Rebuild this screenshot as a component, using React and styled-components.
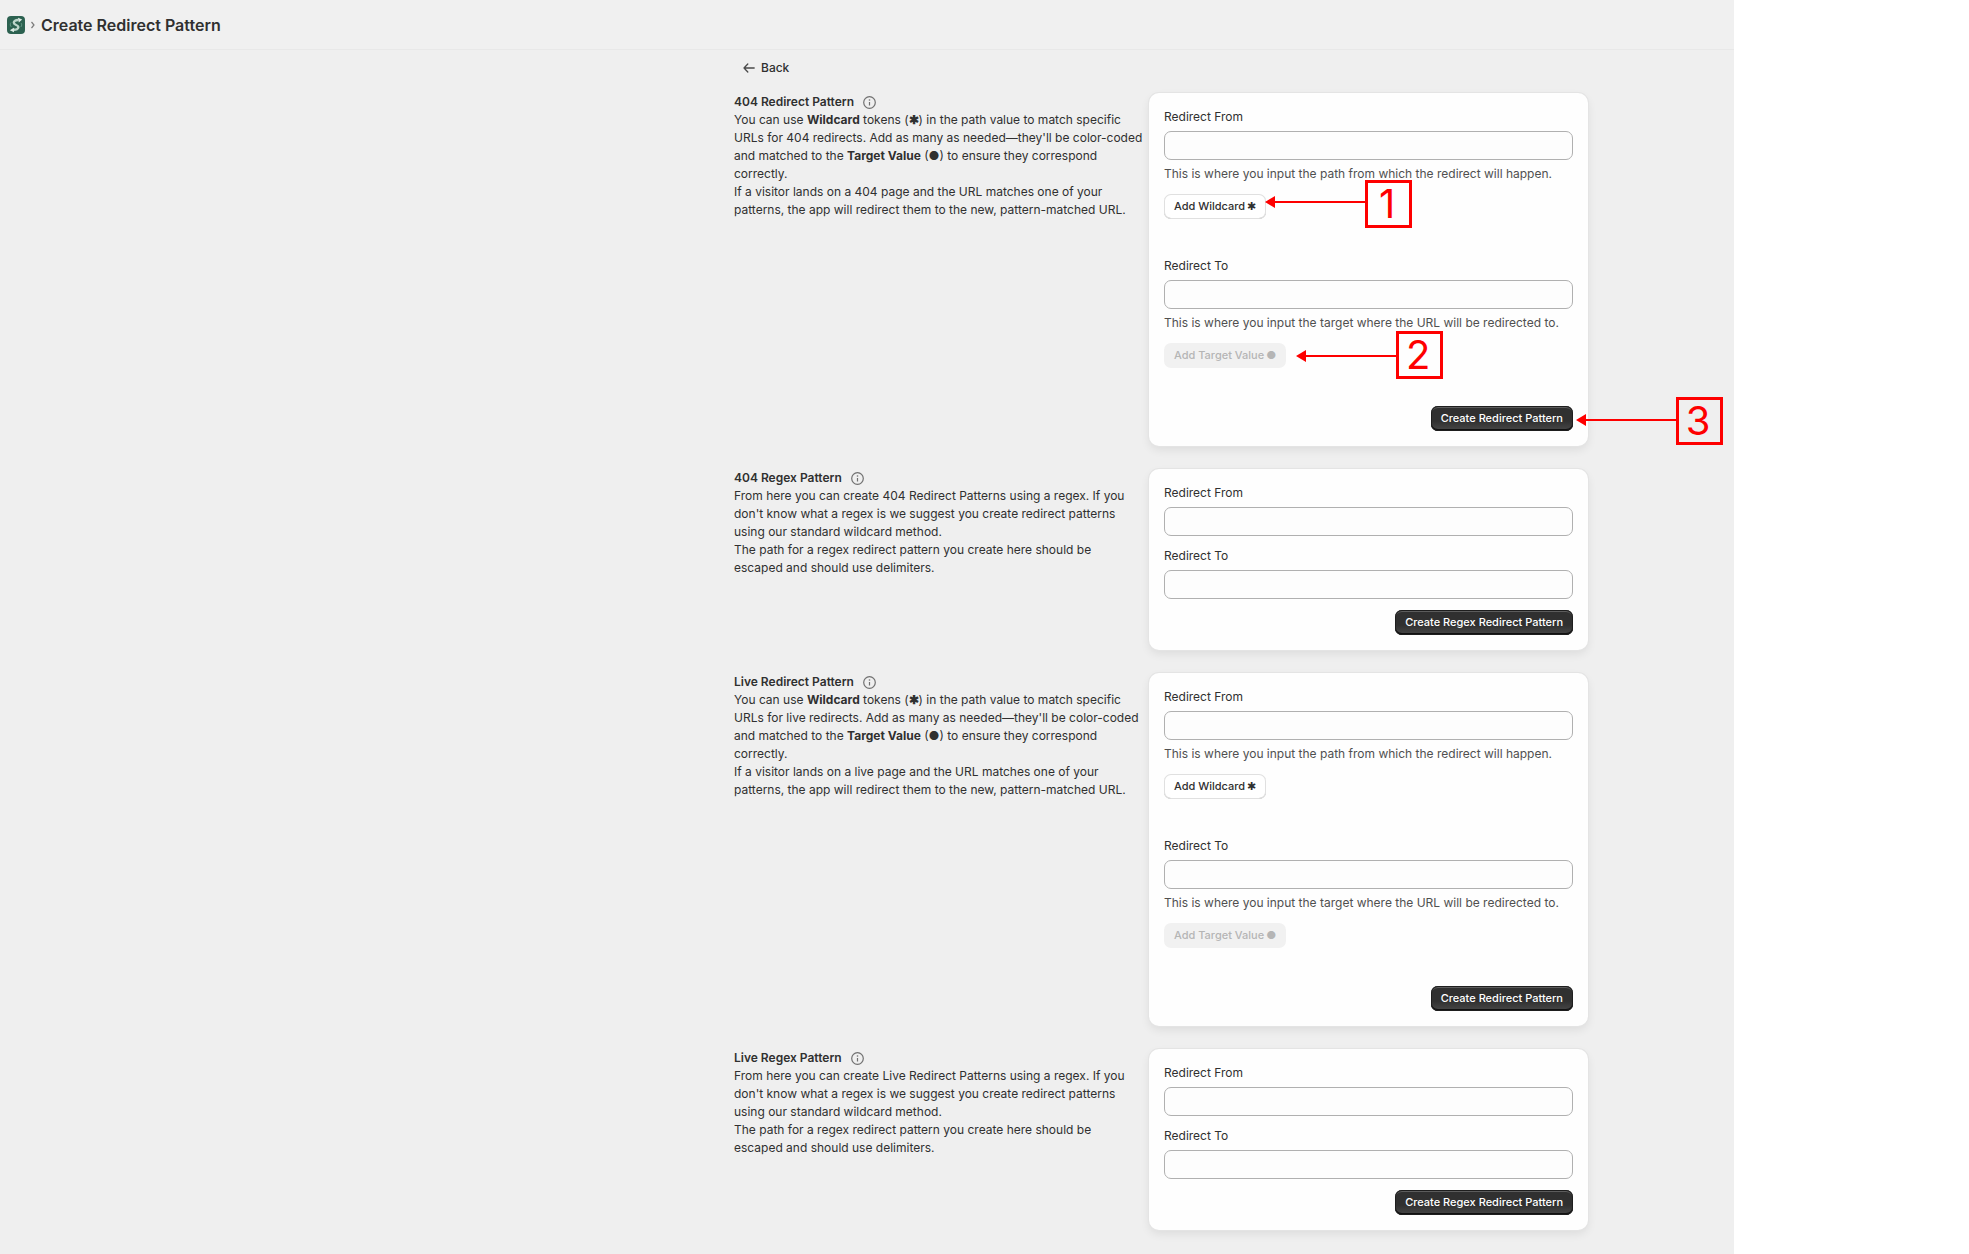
import React, { useId } from 'react';
import styled, { createGlobalStyle } from 'styled-components';

const GlobalStyle = createGlobalStyle`
    *, *:before, *:after {
        box-sizing: border-box;
    }

    body {
        margin: 0;
        background: #fff;
        color: #303030;
        font-family: Inter, "Liberation Sans", sans-serif;
        font-size: 12px;
        line-height: 18px;
    }

    h1, h2, p {
        margin: 0;
        font-size: inherit;
    }

    b {
        font-weight: 650;
    }
`;

const Page = styled.div`
    min-height: 100vh;
    padding-right: 235px;
    display: flex;
`;

const Frame = styled.div`
    flex: 1;
    min-width: 0;
    background: #efefef;
`;

const TitleBar = styled.header`
    display: flex;
    align-items: center;
    gap: 6px;
    height: 50px;
    padding: 0 7px;
    border-bottom: 1px solid #e8e8e8;
    background: #f0f0f0;

    h1 {
        font-size: 16px;
        font-weight: 600;
        line-height: 24px;
    }
`;

const Main = styled.main`
    max-width: 1000px;
    margin-left: auto;
    padding: 9px 146px 24px 0;
`;

const BackLink = styled.a`
    display: inline-flex;
    align-items: center;
    gap: 6px;
    margin-left: 9px;
    color: #303030;
    font-weight: 550;
    text-decoration: none;
`;

const Sections = styled.div`
    display: flex;
    flex-direction: column;
    gap: 23px;
    margin-top: 15px;
`;

const Section = styled.section`
    display: grid;
    grid-template-columns: minmax(0, 410fr) minmax(0, 439fr);
    gap: 5px;
`;

const SectionTitle = styled.div`
    display: flex;
    align-items: center;
    gap: 9px;

    h2 {
        font-weight: 600;
    }
`;

const Card = styled.form`
    display: flex;
    flex-direction: column;
    gap: ${props => props.$gap};
    padding: 15px;
    border-radius: 10px;
    background: #fefefe;
    box-shadow: 0 0 0 1px #e4e4e4, 0 4px 10px rgba(0, 0, 0, 0.08);
`;

const Field = styled.div`
    display: flex;
    flex-direction: column;
    gap: 5px;
`;

const TextInput = styled.input`
    width: 100%;
    height: 29px;
    padding: 0 10px;
    border: 1px solid #b0b0b0;
    border-radius: 7px;
    background: #fdfdfd;
    font: inherit;
`;

const Help = styled.p`
    color: #505050;
`;

const ButtonRow = styled.div`
    display: flex;
    justify-content: ${props => (props.$end ? 'flex-end' : 'flex-start')};
    margin-top: ${props => (props.$below ? '6px' : '0')};
`;

const Anchor = styled.div`
    position: relative;
`;

const Button = styled.button`
    display: flex;
    align-items: center;
    gap: 2px;
    height: 25px;
    padding: 0 10px 2px;
    border: 0;
    border-radius: 7px;
    background: #fff;
    box-shadow: inset 0 0 0 1px #e0e0e0, inset 0 -1px 0 #b5b5b5;
    color: #303030;
    font: inherit;
    font-size: 11px;
    font-weight: 550;
    white-space: nowrap;

    &:disabled {
        background: #f1f1f1;
        box-shadow: none;
        color: #b5b5b5;
    }
`;

const PrimaryButton = styled(Button)`
    background: linear-gradient(#303030 60%, #484848);
    box-shadow: inset 0 0 0 1px #1e1e1e, inset 0 -2px 0 #111, inset 0 2px 0 #5c5c5c;
    color: #fff;
`;

const CalloutBox = styled.div`
    position: absolute;
    z-index: 1;
    left: 100%;
    top: ${props => props.$top};
    display: flex;
    margin-left: ${props => props.$offset};
    color: #fe0000;
    pointer-events: none;
`;

const CalloutNumber = styled.div`
    display: flex;
    align-items: center;
    justify-content: center;
    width: 47px;
    height: 48px;
    padding-right: 3px;
    border: 3px solid;
    font-size: 40px;
    line-height: 42px;
`;

function Callout({ number, top, offset, lineY }) {
    return (
        <CalloutBox $top={top} $offset={offset}>
            <svg width="100" height="48" fill="currentColor">
                <path d={`M0 ${lineY}l10 -6v5h90v2h-90v5z`} />
            </svg>
            <CalloutNumber>{number}</CalloutNumber>
        </CalloutBox>
    );
}

const AppLogo = () => (
    <svg width="18" height="18" viewBox="0 0 18 18" aria-hidden="true">
        <rect width="18" height="18" rx="4" fill="#2c6150" />
        <path d="M4 6.500C2.800 8 3 10 4.500 11M14 7c1 1 1 2.800-.2 4" fill="none" stroke="#5f9582" />
        <path d="M11.500 4C8.500 3.800 6.800 5 6.800 6.800c0 2.400 4.600 2 4.600 4.300 0 1.800-2 2.900-5.400 2.700" fill="none" stroke="#bcd5ca" strokeWidth="2.400" />
        <path d="M11 1.800 15.200 3.600 11.800 6.400zM6.800 11.800 2.800 14.200 7 16.200z" fill="#dcebe4" />
    </svg>
);

const Chevron = () => (
    <svg width="4" height="8" viewBox="0 0 4 8" fill="none" stroke="#7a7a7a" strokeWidth="1.200" aria-hidden="true">
        <path d="M.5 1 3 4 .5 7" />
    </svg>
);

const BackArrow = () => (
    <svg width="12" height="10" viewBox="0 0 12 10" fill="none" stroke="#4a4a4a" strokeWidth="1.300" strokeLinecap="round" strokeLinejoin="round" aria-hidden="true">
        <path d="M11.200 5H1M4.800 1 1 5l3.800 4" />
    </svg>
);

const InfoIcon = () => (
    <svg width="13" height="13" viewBox="0 0 13 13" fill="none" stroke="#707070" aria-hidden="true">
        <circle cx="6.5" cy="6.5" r="5.800" strokeWidth="1.200" />
        <path d="M6.500 6v3.500" strokeWidth="1.200" />
        <circle cx="6.500" cy="4" r=".8" fill="#707070" stroke="none" />
    </svg>
);

function WildcardForm({ callouts }) {
    const id = useId();

    return (
        <Card $gap="38px" onSubmit={e => e.preventDefault()}>
            <Field>
                <label htmlFor={`${id}from`}>Redirect From</label>
                <TextInput id={`${id}from`} type="text" />
                <Help>This is where you input the path from which the redirect will happen.</Help>
                <ButtonRow $below>
                    <Anchor>
                        <Button type="button">Add Wildcard <span>✱</span></Button>
                        {callouts && <Callout number="1" top="-14px" offset="-1px" lineY={22} />}
                    </Anchor>
                </ButtonRow>
            </Field>
            <Field>
                <label htmlFor={`${id}to`}>Redirect To</label>
                <TextInput id={`${id}to`} type="text" />
                <Help>This is where you input the target where the URL will be redirected to.</Help>
                <ButtonRow $below>
                    <Anchor>
                        <Button type="button" disabled>Add Target Value <span>●</span></Button>
                        {callouts && <Callout number="2" top="-12px" offset="10px" lineY={25} />}
                    </Anchor>
                </ButtonRow>
            </Field>
            <ButtonRow $end>
                <Anchor>
                    <PrimaryButton>Create Redirect Pattern</PrimaryButton>
                    {callouts && <Callout number="3" top="-9px" offset="3px" lineY={23} />}
                </Anchor>
            </ButtonRow>
        </Card>
    );
}

function RegexForm() {
    const id = useId();

    return (
        <Card $gap="11px" onSubmit={e => e.preventDefault()}>
            <Field>
                <label htmlFor={`${id}from`}>Redirect From</label>
                <TextInput id={`${id}from`} type="text" />
            </Field>
            <Field>
                <label htmlFor={`${id}to`}>Redirect To</label>
                <TextInput id={`${id}to`} type="text" />
            </Field>
            <ButtonRow $end>
                <PrimaryButton>Create Regex Redirect Pattern</PrimaryButton>
            </ButtonRow>
        </Card>
    );
}

function WildcardSection({ title, kind, callouts }) {
    return (
        <Section>
            <div>
                <SectionTitle>
                    <h2>{title}</h2>
                    <InfoIcon />
                </SectionTitle>
                <p>
                    You can use <b>Wildcard</b> tokens (<b>✱</b>) in the path value to match specific
                    URLs for {kind} redirects. Add as many as needed—they'll be color-coded
                    and matched to the <b>Target Value</b> (●) to ensure they correspond correctly.
                </p>
                <p>
                    If a visitor lands on a {kind} page and the URL matches one of your
                    patterns, the app will redirect them to the new, pattern-matched URL.
                </p>
            </div>
            <WildcardForm callouts={callouts} />
        </Section>
    );
}

function RegexSection({ title, kind }) {
    return (
        <Section>
            <div>
                <SectionTitle>
                    <h2>{title}</h2>
                    <InfoIcon />
                </SectionTitle>
                <p>
                    From here you can create {kind} Redirect Patterns using a regex. If you
                    don't know what a regex is we suggest you create redirect patterns
                    using our standard wildcard method.
                </p>
                <p>
                    The path for a regex redirect pattern you create here should be<br />
                    escaped and should use delimiters.
                </p>
            </div>
            <RegexForm />
        </Section>
    );
}

class App extends React.Component {
    render() {
        return (
            <Page>
                <GlobalStyle />
                <Frame>
                    <TitleBar>
                        <AppLogo />
                        <Chevron />
                        <h1>Create Redirect Pattern</h1>
                    </TitleBar>
                    <Main>
                        <BackLink href="#"><BackArrow /> Back</BackLink>
                        <Sections>
                            <WildcardSection title="404 Redirect Pattern" kind="404" callouts />
                            <RegexSection title="404 Regex Pattern" kind="404" />
                            <WildcardSection title="Live Redirect Pattern" kind="live" />
                            <RegexSection title="Live Regex Pattern" kind="Live" />
                        </Sections>
                    </Main>
                </Frame>
            </Page>
        );
    }
}

export default App;
